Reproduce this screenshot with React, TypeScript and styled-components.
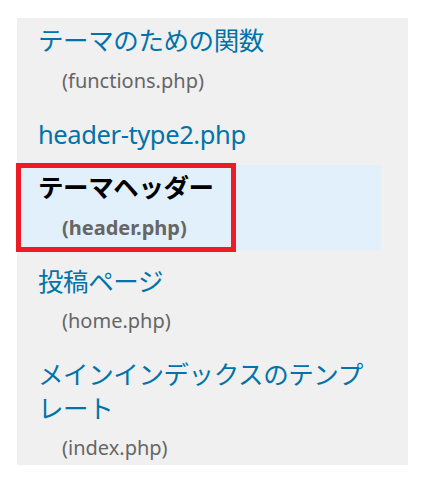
import React from "react";
import styled, { createGlobalStyle } from "styled-components";

const Global = createGlobalStyle`
  html, body { margin: 0; padding: 0; background: #ffffff; }
  body { font-family: "Noto Sans", "Noto Sans CJK JP", sans-serif; }
`;

const Panel = styled.nav`
  margin: 18px 19px 0 17px;
  background: #f0f0f0;
  padding: 0 27px 0 0;
`;

const List = styled.ul`
  list-style: none;
  margin: 0;
  padding: 0;
  display: flex;
  flex-direction: column;
  gap: 9px;
`;

const Item = styled.li<{ $current?: boolean }>`
  position: relative;
  padding: 6px 0 5px 21px;
  background: ${(p) => (p.$current ? "#e2f0fc" : "transparent")};
  &:last-child { padding-bottom: 0; }
`;

const Title = styled.a<{ $current?: boolean }>`
  display: block;
  font-family: "Noto Sans", "Noto Sans CJK JP", sans-serif;
  font-size: 25.5px;
  line-height: 33.5px;
  letter-spacing: -0.4px;
  color: ${(p) => (p.$current ? "#000000" : "#0073aa")};
  font-weight: ${(p) => (p.$current ? 700 : 400)};
  text-decoration: none;
`;

const FileName = styled.div<{ $current?: boolean }>`
  margin-top: 6px;
  padding-left: 24px;
  font-family: "Noto Sans", sans-serif;
  font-size: 20px;
  line-height: 34px;
  color: #666666;
  font-weight: ${(p) => (p.$current ? 700 : 400)};
`;

const Marker = styled.span`
  position: absolute;
  left: -1px;
  top: -2px;
  width: 220px;
  height: 89px;
  box-sizing: border-box;
  border: 5px solid #ed1c24;
  pointer-events: none;
`;

type Entry = { title: string; file?: string; current?: boolean };

const entries: Entry[] = [
  { title: "テーマのための関数", file: "(functions.php)" },
  { title: "header-type2.php" },
  { title: "テーマヘッダー", file: "(header.php)", current: true },
  { title: "投稿ページ", file: "(home.php)" },
  { title: "メインインデックスのテンプレート", file: "(index.php)" },
];

export default function App() {
  return (
    <>
      <Global />
      <Panel>
        <List>
          {entries.map((e) => (
            <Item key={e.title} $current={e.current}>
              <Title href="#" $current={e.current}>{e.title}</Title>
              {e.file && <FileName $current={e.current}>{e.file}</FileName>}
              {e.current && <Marker />}
            </Item>
          ))}
        </List>
      </Panel>
    </>
  );
}
